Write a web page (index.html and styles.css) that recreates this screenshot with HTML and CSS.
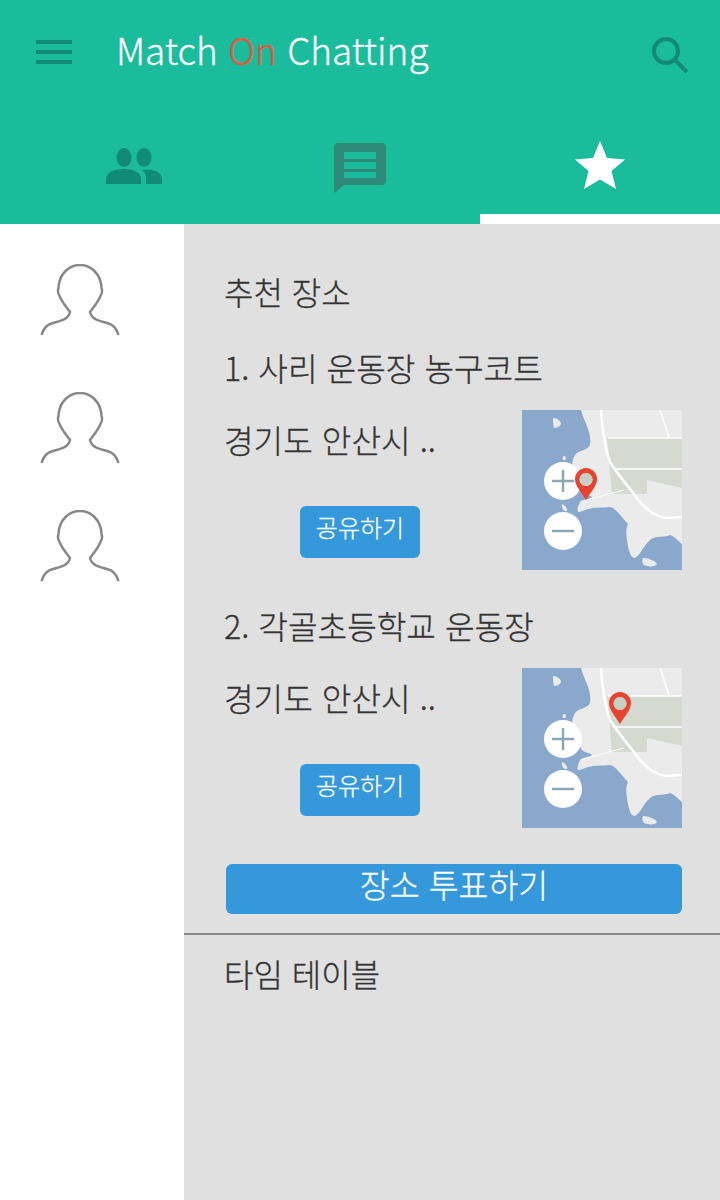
FILE: index.html
```html
<!DOCTYPE html>
<html lang="ko">

<head>
    <meta charset="UTF-8">
    <title>Match On Chatting</title>
    <link rel="stylesheet" href="styles.css">
</head>

<body>
    <svg class="defs" width="0" height="0">
        <symbol id="map" viewBox="0 0 160 160">
            <rect width="160" height="160" fill="#8aa8cb" />
            <path fill="#ebebeb" d="M59 0C62 12 70 22 68 35C65 41 56 40 53 45C50 50 50 54 51 57C53 66 56 76 60 82C63 85 68 85 70 87C66 90 60 89 58 92C56 96 55 100 56 102C59 102 62 100 66 99C72 97 80 98 88 97C94 98 100 108 106 114C104 118 104 124 105 130C106 138 108 147 112 148C118 147 120 137 128 130C134 125 144 128 148 125C152 126 156 131 160 134V0Z" />
            <path fill="#ebebeb" d="M31 8C35 8 39 11 39 14C38 17 34 18 32 18C31 15 31 11 31 8ZM42 46C44 46 45 48 43 50C41 51 39 48 42 46ZM40 94C43 95 46 99 45 101C42 102 39 98 40 94ZM121 148C126 148 134 151 135 154C134 157 126 157 122 155C120 153 120 150 121 148Z" />
            <path fill="#d5d9cf" d="M85 28H160V78L125 70V84H90C88 70 88 50 85 28Z" />
            <g fill="none" stroke="#fff" stroke-width="2.500">
                <path d="M79 0C80 20 84 42 88 52C94 62 104 74 112 84C120 96 130 106 144 108L160 107" />
                <path d="M138 0L147 27M86 28H160M92 59H160" stroke-width="1.500" />
                <path d="M60 92C70 88 80 86 102 80" stroke-width="1" />
            </g>
            <circle cx="41" cy="71" r="19" fill="#fff" />
            <circle cx="41" cy="121" r="19" fill="#fff" />
            <path fill="none" stroke="#8aa8b8" stroke-width="2.500" d="M30 71H52M41 60V82M30 121H52" />
        </symbol>
        <symbol id="person" viewBox="0 0 80 72">
            <path fill="none" stroke="#888" stroke-width="2.500" d="M1.500 71C4 63 8 60 13 59C20 57 28 56 30 48C27 44 22 38 20 33C18 30 17 28 18.500 24C19 10 29 1 40 1C51 1 61 10 61.500 24C63 28 62 30 60 33C58 38 53 44 50 48C52 56 60 57 67 59C72 60 76 63 78.500 71" />
        </symbol>
        <symbol id="pin" viewBox="0 0 22 32">
            <path fill="#e8432e" fill-rule="evenodd" d="M11 0C17 0 22 5 22 11C22 18 15 25 11 32C7 25 0 18 0 11C0 5 5 0 11 0ZM11 5A6.500 6.500 0 1 0 11 18A6.500 6.500 0 1 0 11 5Z" />
            <circle cx="11" cy="11.500" r="6.500" fill="#c8d0c4" />
        </symbol>
    </svg>

    <div class="app">
        <header class="header">
            <div class="topbar">
                <div class="menu"><span></span><span></span><span></span></div>
                <h1 class="title">Match <span class="title-on">On</span> Chatting</h1>
                <svg class="search" width="36" height="36" viewBox="0 0 36 36">
                    <circle cx="14" cy="14" r="12" fill="none" stroke="#128b76" stroke-width="4" />
                    <path d="M22.500 22.500L35 35" fill="none" stroke="#128b76" stroke-width="4" />
                </svg>
            </div>
            <nav class="tabs">
                <div class="tab">
                    <svg class="tab-people" width="56" height="36" viewBox="0 0 56 36">
                        <ellipse cx="18" cy="9.500" rx="7.500" ry="9.500" fill="#128b76" />
                        <ellipse cx="38" cy="9.500" rx="7.500" ry="9.500" fill="#128b76" />
                        <path d="M0 36V31C0 24 9 21 18 21C27 21 35 24 35 31V36Z" fill="#128b76" />
                        <path d="M40 36V29C40 26 38 24 36 22C46 20 56 24 56 31V36Z" fill="#128b76" />
                    </svg>
                </div>
                <div class="tab">
                    <svg class="tab-chat" width="52" height="50" viewBox="0 0 52 50">
                        <path d="M4 0H48C50 0 52 2 52 4V38C52 40 50 42 48 42H10L0 50V4C0 2 2 0 4 0Z" fill="#2e8a78" />
                        <path d="M10 9H42V16H10ZM10 19H42V26H10ZM10 29H42V35H10Z" fill="#1bbc9b" />
                    </svg>
                </div>
                <div class="tab tab-active">
                    <svg class="tab-star" width="50" height="48" viewBox="0 0 50 48">
                        <path d="M25 0L32 17L50 18.500L36.500 30L41 48L25 38.500L9 48L13.500 30L0 18.500L18 17Z" fill="#fff" />
                    </svg>
                </div>
            </nav>
        </header>

        <div class="main">
            <aside class="friends">
                <svg class="friend" width="80" height="72"><use href="#person" /></svg>
                <svg class="friend" width="80" height="72"><use href="#person" /></svg>
                <svg class="friend" width="80" height="72"><use href="#person" /></svg>
            </aside>

            <section class="content">
                <h2 class="section-title">추천 장소</h2>

                <div class="place place-first">
                    <h3 class="place-name">1. 사리 운동장 농구코트</h3>
                    <div class="place-body">
                        <div class="place-info">
                            <p class="address">경기도 안산시 ..</p>
                            <a class="share" href="javascript:;">공유하기</a>
                        </div>
                        <div class="map">
                            <svg class="map-img" width="160" height="160"><use href="#map" /></svg>
                            <svg class="pin pin-first" width="22" height="32"><use href="#pin" /></svg>
                        </div>
                    </div>
                </div>

                <div class="place">
                    <h3 class="place-name">2. 각골초등학교 운동장</h3>
                    <div class="place-body">
                        <div class="place-info">
                            <p class="address">경기도 안산시 ..</p>
                            <a class="share" href="javascript:;">공유하기</a>
                        </div>
                        <div class="map">
                            <svg class="map-img" width="160" height="160"><use href="#map" /></svg>
                            <svg class="pin pin-second" width="22" height="32"><use href="#pin" /></svg>
                        </div>
                    </div>
                </div>

                <a class="vote" href="javascript:;">장소 투표하기</a>
                <div class="divider"></div>
                <h2 class="section-title section-time">타임 테이블</h2>
            </section>
        </div>
    </div>
</body>

</html>
```

FILE: styles.css
```css
* {
    margin: 0;
    padding: 0;
    box-sizing: border-box;
}

body {
    width: 720px;
    height: 1200px;
    overflow: hidden;
    background-color: #fff;
    font-family: "Noto Sans CJK KR", "Noto Sans", sans-serif;
    font-weight: 300;
    -webkit-text-stroke: 0.3px;
    color: #333;
}

.defs {
    display: block;
    height: 0;
}

.app {
    display: flex;
    flex-direction: column;
    height: 1200px;
}

.header {
    height: 224px;
    background-color: #1bbc9b;
}

.topbar {
    display: flex;
    align-items: center;
    height: 104px;
    padding-left: 36px;
}

.menu {
    display: flex;
    flex-direction: column;
    gap: 6px;
    width: 36px;
}

.menu span {
    display: block;
    height: 4px;
    background-color: #128b76;
}

.title {
    width: 535px;
    margin-top: -6px;
    padding-left: 44px;
    font-size: 37px;
    font-weight: 300;
    line-height: 50px;
    color: #fff;
}

.title-on {
    color: #e1573f;
}

.search {
    margin-top: 6px;
    margin-left: 45px;
}

.tabs {
    display: flex;
    height: 120px;
}

.tab {
    display: flex;
    justify-content: center;
    width: 240px;
}

.tab-active {
    border-bottom: 10px solid #fff;
}

.tab-people {
    margin-top: 44px;
    margin-left: 28px;
}

.tab-chat {
    margin-top: 39px;
}

.tab-star {
    margin-top: 37px;
}

.main {
    display: flex;
    flex: 1;
}

.friends {
    display: flex;
    flex-direction: column;
    align-items: flex-start;
    width: 184px;
    padding: 40px 0 0 40px;
}

.friend {
    display: block;
    margin-bottom: 56px;
}

.friend:nth-child(2) {
    margin-bottom: 46px;
}

.content {
    flex: 1;
    background-color: #e0e0e0;
    padding-left: 40px;
}

.section-title {
    margin-top: 44px;
    font-size: 32px;
    font-weight: 300;
    line-height: 46px;
}

.place-first {
    margin-top: 30px;
}

.place {
    height: 258px;
}

.place-name {
    font-size: 32.200px;
    font-weight: 300;
    line-height: 46px;
}

.place-body {
    display: flex;
    margin-top: 20px;
}

.place-info {
    width: 298px;
}

.address {
    margin-top: 6px;
    font-size: 32.200px;
    line-height: 46px;
}

.share {
    display: block;
    width: 120px;
    height: 52px;
    margin: 44px 0 0 76px;
    border-radius: 6px;
    background-color: #3498db;
    font-size: 24px;
    line-height: 42px;
    text-align: center;
    color: #fff;
    text-decoration: none;
}

.map {
    position: relative;
    width: 160px;
    height: 160px;
}

.map svg {
    display: block;
}

.map-img {
    filter: blur(0.4px);
}

.pin {
    position: absolute;
}

.map .pin-first {
    left: 53px;
    top: 58px;
}

.map .pin-second {
    left: 87px;
    top: 24px;
}

.vote {
    display: block;
    width: 456px;
    height: 50px;
    margin: 4px 0 0 2px;
    border-radius: 6px;
    background-color: #3498db;
    font-size: 32.500px;
    line-height: 40px;
    text-align: center;
    color: #fff;
    text-decoration: none;
}

.divider {
    height: 2px;
    margin: 19px 0 0 -40px;
    background-color: #888;
}

.section-time {
    margin-top: 15px;
}
```
